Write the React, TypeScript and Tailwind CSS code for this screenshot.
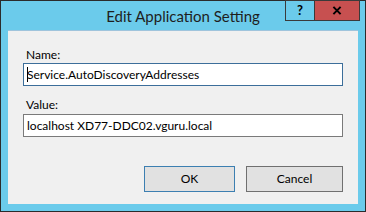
export default function App() {
  const font = { fontFamily: '"Segoe UI", Lato, "Noto Sans", sans-serif' };

  return (
    <div
      className="w-[366px] h-[212px] flex flex-col border border-[#2b2b2b] bg-[#6bcbeb] text-black select-none"
      style={font}
    >
      {/* Title bar */}
      <div className="h-[29px] shrink-0 grid grid-cols-[1fr_auto_1fr] items-start">
        <div />
        <div className="pt-[6px] text-[15px] leading-[18px] text-[#1e1e1e]">Edit Application Setting</div>
        <div className="flex justify-end pr-[5px] -mt-px">
          <div className="w-[29px] h-[21px] border border-[#3a3a3a] border-r-0 flex items-center justify-center text-[13px] font-bold leading-none">
            ?
          </div>
          <div className="w-[46px] h-[21px] border border-[#3a3a3a] bg-[#c75050] flex items-center justify-center">
            <svg viewBox="0 0 10 10" className="w-[10px] h-[9px]" fill="none" stroke="black" strokeWidth="2.2">
              <path d="M1 1l8 8M9 1l-8 8" />
            </svg>
          </div>
        </div>
      </div>

      {/* Client area */}
      <div className="flex-1 mx-[7px] mb-[7px] bg-[#f0f0f0] border-t border-[#9fc4dc] px-[15px] pt-[16px] flex flex-col text-[12px]">
        <label className="pl-[3px] leading-[16px]">Name:</label>
        <div className="h-[23px] border border-[#3c6e9a] bg-white flex items-center pl-[3px]">
          <span className="w-px h-[15px] bg-black -mr-px" />
          <span className="leading-[16px]">Service.AutoDiscoveryAddresses</span>
        </div>

        <label className="pl-[3px] leading-[16px] mt-[11px] mb-[1px]">Value:</label>
        <div className="h-[23px] border border-[#7a7a7a] bg-white flex items-center pl-[3px]">
          <span className="leading-[16px]">localhost XD77-DDC02.vguru.local</span>
        </div>

        <div className="flex justify-end gap-[11px] mt-[29px]">
          <button className="w-[91px] h-[26px] border border-[#3c7fb1] bg-[#e1e1e1] text-[12px] leading-none">
            OK
          </button>
          <button className="w-[97px] h-[26px] border border-[#707070] bg-[#e1e1e1] text-[12px] leading-none">
            Cancel
          </button>
        </div>
      </div>
    </div>
  );
}
